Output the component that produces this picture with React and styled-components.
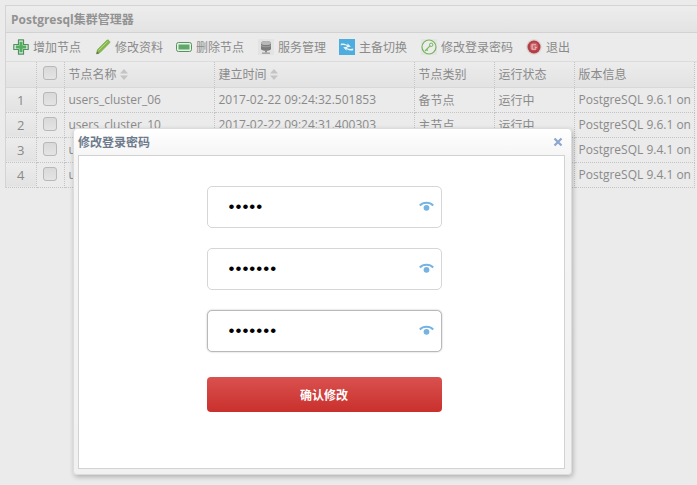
import React from 'react';
import styled, { createGlobalStyle } from 'styled-components';

const Global = createGlobalStyle`
  html, body { margin: 0; padding: 0; background: #ebebeb; }
  body {
    width: 697px;
    height: 485px;
    overflow: hidden;
    font-family: 'Open Sans', 'Noto Sans CJK SC', sans-serif;
    color: #7f7f7f;
  }
`;

const Page = styled.div`
  position: relative;
  width: 697px;
  height: 485px;
  padding: 5px 0 0 5px;
  box-sizing: border-box;
  overflow: hidden;
`;

const Panel = styled.div`
  width: 692px;
  border-top: 1px solid #d4d4d4;
  border-left: 1px solid #d4d4d4;
`;

const PanelTitle = styled.div`
  height: 26px;
  line-height: 27px;
  padding-left: 5px;
  font-size: 12px;
  font-weight: 700;
  color: #929292;
  background: linear-gradient(#ededed, #e3e3e3);
  border-bottom: 1px solid #d2d2d2;
`;

const Toolbar = styled.div`
  display: flex;
  align-items: center;
  height: 28px;
  padding-left: 7px;
  background: #ebebeb;
  border-bottom: 1px solid #dcdcdc;
`;

const ToolButton = styled.div`
  display: flex;
  align-items: center;
  gap: 4px;
  font-size: 12px;
  color: #8a8a8a;
  margin-right: ${p => p.$gap}px;
  white-space: nowrap;
`;

const Grid = styled.table`
  border-collapse: collapse;
  table-layout: fixed;
  width: 688px;
  font-size: 12px;
`;

const HeadCell = styled.th`
  height: 25px;
  padding: 0 0 0 4px;
  box-sizing: border-box;
  font-weight: 400;
  text-align: left;
  color: #8a8a8a;
  background: linear-gradient(#ececec, #e2e2e2);
  border-right: 1px dotted #c4c4c4;
  border-bottom: 1px solid #d8d8d8;
  white-space: nowrap;
  overflow: hidden;
`;

const Cell = styled.td`
  height: 25px;
  padding: 0 0 0 4px;
  box-sizing: border-box;
  color: #8a8a8a;
  border-right: 1px dotted #c4c4c4;
  border-bottom: 1px dotted #c4c4c4;
  white-space: nowrap;
  overflow: hidden;
`;

const NumCell = styled(Cell)`
  padding: 0;
  text-align: center;
  font-size: 13px;
  background: linear-gradient(#ececec, #e2e2e2);
`;

const CheckCell = styled(Cell)`
  padding: 0;
`;

const HeadCheckCell = styled(HeadCell)`
  padding: 0;
`;

const Check = styled.span`
  display: block;
  width: 12px;
  height: 12px;
  margin: 0 0 2px 6px;
  border: 1px solid #b8b8b8;
  border-radius: 3px;
  background: linear-gradient(#d9d9d9, #e4e4e4);
`;

const SortMark = styled.svg`
  margin-left: 3px;
  vertical-align: -1px;
`;

const Modal = styled.div`
  position: absolute;
  left: 73px;
  top: 128px;
  width: 499px;
  height: 347px;
  padding: 0 6px 5px 4px;
  box-sizing: border-box;
  display: flex;
  flex-direction: column;
  background: linear-gradient(#ffffff, #f4f4f4 30px, #f1f1f1);
  border: 1px solid #dcdcdc;
  border-radius: 4px;
  box-shadow: 1px 2px 5px rgba(0, 0, 0, 0.25);
`;

const ModalHead = styled.div`
  display: flex;
  align-items: center;
  justify-content: space-between;
  height: 26px;
  flex: none;
  font-size: 12px;
  font-weight: 700;
  color: #6d7a8c;
  padding-right: 2px;
`;

const ModalBody = styled.div`
  flex: 1;
  display: flex;
  flex-direction: column;
  align-items: center;
  padding: 30px 0 0 5px;
  background: #fff;
  border: 1px solid #d2d2d2;
`;

const Field = styled.label`
  position: relative;
  display: block;
  width: 235px;
  height: 42px;
  margin-bottom: 20px;
`;

const Input = styled.input`
  width: 100%;
  height: 100%;
  box-sizing: border-box;
  padding: 0 40px 0 21px;
  font-family: 'Liberation Sans', sans-serif;
  font-size: 17px;
  letter-spacing: 1px;
  color: #000;
  background: #fff;
  border: 1px solid ${p => (p.$focus ? '#b9b9b9' : '#d6d6d6')};
  border-radius: 5px;
  outline: none;
  box-shadow: ${p => (p.$focus ? '0 0 2px rgba(0,0,0,0.25)' : 'none')};
`;

const Eye = styled.svg`
  position: absolute;
  right: 8px;
  top: 15px;
`;

const Submit = styled.button`
  width: 235px;
  height: 35px;
  margin-top: 5px;
  padding: 0;
  border: 0;
  border-radius: 4px;
  font-family: inherit;
  font-size: 12px;
  font-weight: 700;
  color: #fff;
  background: linear-gradient(#d9514f, #c9302c);
`;

const PlusIcon = () => (
  <svg width="16" height="16" viewBox="0 0 16 16">
    <path d="M5.500.8h5v4.700h4.700v5h-4.700v4.700h-5v-4.700H.8v-5h4.700z" fill="#dfeadf" stroke="#4f9160" strokeWidth="1.200" strokeLinejoin="round" />
    <path d="M6.500 2.800h3v3.700h3.700v3H9.500v3.700h-3V9.500H2.800v-3h3.700z" fill="#55ad5f" />
  </svg>
);

const PencilIcon = () => (
  <svg width="16" height="16" viewBox="0 0 16 16">
    <path d="M1.500 15l.9-4.300L11.800 1.300c.6-.5 1.300-.5 1.800 0l.9.9c.5.5.5 1.200 0 1.800L5.100 13.500z" fill="#86b94c" stroke="#6e9e3c" strokeWidth="0.600" strokeLinejoin="round" />
    <path d="M3.500 11.500L12.500 2.500" stroke="#b3d884" strokeWidth="1" />
    <path d="M1.500 15l.6-2.800 2.200 2.200z" fill="#66705a" />
  </svg>
);

const MinusIcon = () => (
  <svg width="16" height="16" viewBox="0 0 16 16">
    <rect x="0.500" y="3.500" width="15" height="9" rx="2" fill="#e8efe6" stroke="#55935f" />
    <rect x="2.500" y="5.500" width="11" height="5" fill="#5fa868" />
  </svg>
);

const DbIcon = () => (
  <svg width="16" height="16" viewBox="0 0 16 16">
    <rect width="16" height="16" fill="#e3e3e3" />
    <path d="M3 4c0-2.800 10-2.800 10 0v6c0 2.400-10 2.400-10 0z" fill="#7c7c7c" />
    <ellipse cx="8" cy="4" rx="5" ry="2" fill="#b8b8b8" />
    <path d="M3 6.500c1.500 1.700 8.500 1.700 10 0" stroke="#a8a8a8" strokeWidth="0.800" fill="none" />
    <rect x="7" y="11.500" width="2" height="2" fill="#8a8a8a" />
    <rect x="4" y="13.500" width="8" height="1.300" fill="#9a9a9a" />
  </svg>
);

const SwitchIcon = () => (
  <svg width="16" height="16" viewBox="0 0 16 16">
    <rect width="16" height="16" fill="#4cadde" />
    <path d="M1.800 4.800C4 4 6 4.500 8.500 6V4.300l3.300 3.500-4.800.6 1.200-1.300C6 6 4 5.800 1.800 6.500z" fill="#e9f3f6" />
    <path d="M14.200 11.200C12 12 10 11.500 7.500 10v1.700L4.200 8.200l4.800-.6-1.200 1.300C10 10 12 10.200 14.200 9.500z" fill="#e9f3f6" />
  </svg>
);

const KeyIcon = () => (
  <svg width="16" height="16" viewBox="0 0 16 16" fill="none">
    <rect width="16" height="16" fill="#e4e4e4" />
    <circle cx="8" cy="8" r="7" fill="#ececec" stroke="#74b758" strokeWidth="1.200" />
    <path d="M4 12L8.800 7.200M5.500 10.500l1.300 1.200" stroke="#74b758" strokeWidth="1.100" />
    <circle cx="10.200" cy="5.800" r="1.700" stroke="#74b758" />
  </svg>
);

const ExitIcon = () => (
  <svg width="16" height="16" viewBox="0 0 16 16">
    <circle cx="8" cy="8" r="7.800" fill="#dcd4d4" />
    <circle cx="8" cy="8" r="6.500" fill="#b33f46" />
    <circle cx="8" cy="7.500" r="4" fill="#c9646a" />
    <path d="M5.500 5.200h4.500v1.100H6.700v3.400H10v1.100H5.500zM8.800 7.300l2.500 1.200-2.500 1.200z" fill="#eeb7b9" />
  </svg>
);

const CloseIcon = () => (
  <svg width="10" height="10" viewBox="0 0 10 10">
    <path d="M1.500 1.500l7 7M8.500 1.500l-7 7" stroke="#8ba6d0" strokeWidth="2.200" />
  </svg>
);

const EyeIcon = () => (
  <Eye width="15" height="11" viewBox="0 0 15 11" fill="none">
    <path d="M0.800 4.500C4.200 0.900 10.800 0.900 14.200 4.500" stroke="#74b3e3" strokeWidth="2" />
    <circle cx="7.500" cy="6.800" r="2.900" fill="#74b3e3" />
  </Eye>
);

const Sort = () => (
  <SortMark width="8" height="11" viewBox="0 0 8 11">
    <path d="M4 0l4 4.500H0zM4 11L0 6.500h8z" fill="#c4c4c4" />
  </SortMark>
);

const tools = [
  { label: '增加节点', icon: <PlusIcon />, gap: 14 },
  { label: '修改资料', icon: <PencilIcon />, gap: 13 },
  { label: '删除节点', icon: <MinusIcon />, gap: 14 },
  { label: '服务管理', icon: <DbIcon />, gap: 13 },
  { label: '主备切换', icon: <SwitchIcon />, gap: 14 },
  { label: '修改登录密码', icon: <KeyIcon />, gap: 13 },
  { label: '退出', icon: <ExitIcon />, gap: 0 },
];

const rows = [
  ['users_cluster_06', '2017-02-22 09:24:32.501853', '备节点', '运行中', 'PostgreSQL 9.6.1 on x86_64'],
  ['users_cluster_10', '2017-02-22 09:24:31.400303', '主节点', '运行中', 'PostgreSQL 9.6.1 on x86_64'],
  ['users_cluster_11', '2017-02-22 09:24:30.300112', '备节点', '运行中', 'PostgreSQL 9.4.1 on x86_64'],
  ['users_cluster_12', '2017-02-22 09:24:29.200241', '主节点', '运行中', 'PostgreSQL 9.4.1 on x86_64'],
];

const App = () => (
  <>
    <Global />
    <Page>
      <Panel>
        <PanelTitle>Postgresql集群管理器</PanelTitle>
        <Toolbar>
          {tools.map(t => (
            <ToolButton key={t.label} $gap={t.gap}>
              {t.icon}
              {t.label}
            </ToolButton>
          ))}
        </Toolbar>
        <Grid>
          <colgroup>
            <col width="30" />
            <col width="28" />
            <col width="150" />
            <col width="200" />
            <col width="80" />
            <col width="80" />
            <col width="120" />
          </colgroup>
          <thead>
            <tr>
              <HeadCell />
              <HeadCheckCell><Check /></HeadCheckCell>
              <HeadCell>节点名称<Sort /></HeadCell>
              <HeadCell>建立时间<Sort /></HeadCell>
              <HeadCell>节点类别</HeadCell>
              <HeadCell>运行状态</HeadCell>
              <HeadCell>版本信息</HeadCell>
            </tr>
          </thead>
          <tbody>
            {rows.map((r, i) => (
              <tr key={r[0]}>
                <NumCell>{i + 1}</NumCell>
                <CheckCell><Check /></CheckCell>
                {r.map((c, j) => <Cell key={j}>{c}</Cell>)}
              </tr>
            ))}
          </tbody>
        </Grid>
      </Panel>
      <Modal>
        <ModalHead>
          修改登录密码
          <CloseIcon />
        </ModalHead>
        <ModalBody>
          <Field>
            <Input type="password" defaultValue="12345" readOnly />
            <EyeIcon />
          </Field>
          <Field>
            <Input type="password" defaultValue="1234567" readOnly />
            <EyeIcon />
          </Field>
          <Field>
            <Input type="password" defaultValue="1234567" readOnly $focus />
            <EyeIcon />
          </Field>
          <Submit>确认修改</Submit>
        </ModalBody>
      </Modal>
    </Page>
  </>
);

export default App;
